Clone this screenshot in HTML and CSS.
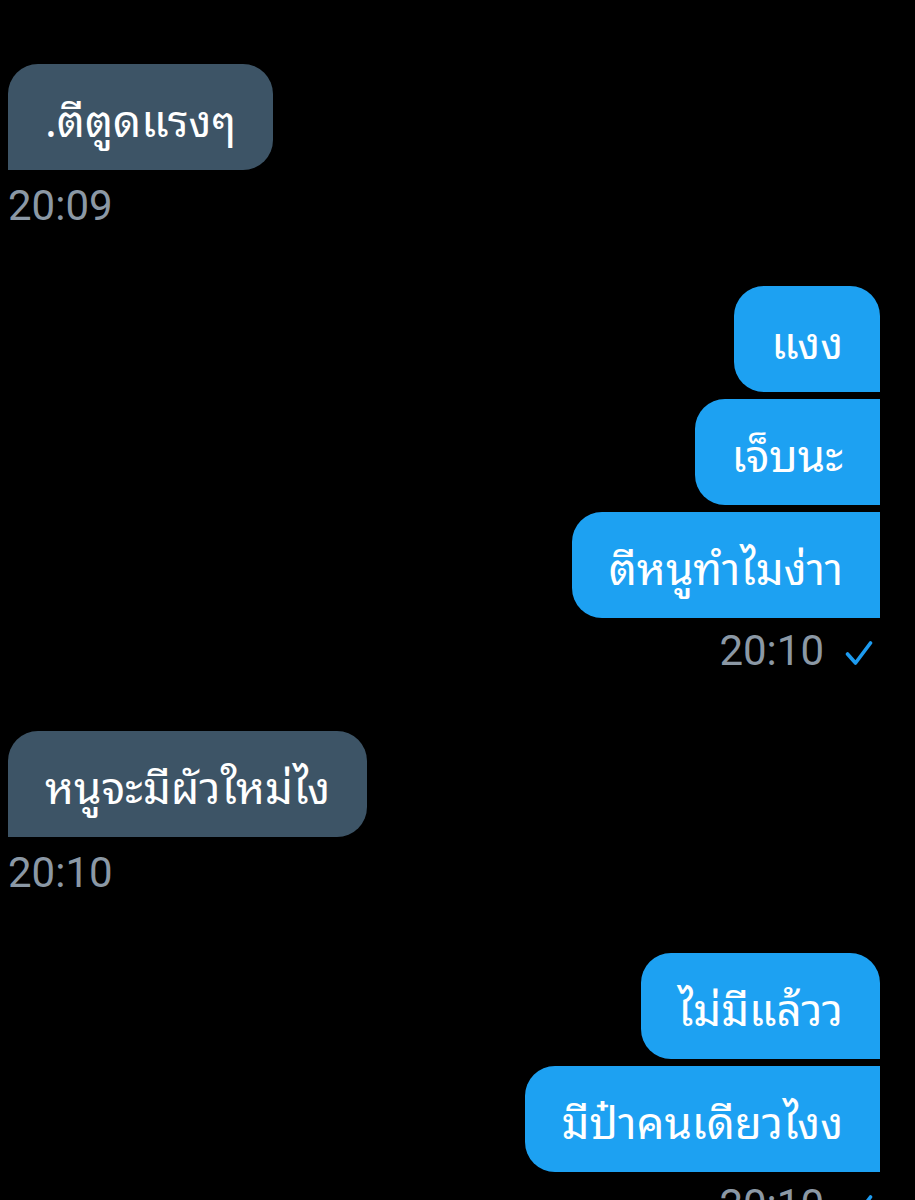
FILE: index.html
```html
<!DOCTYPE html>
<html lang="th">
<head>
<meta charset="utf-8">
<link rel="stylesheet" href="styles.css">
</head>
<body>
<main class="chat">
  <section class="group incoming first">
    <div class="bubble in-single">.ตีตูดแรงๆ</div>
    <div class="meta">20:09</div>
  </section>

  <section class="group outgoing">
    <div class="bubble out-top">แงง</div>
    <div class="bubble out-mid">เจ็บนะ</div>
    <div class="bubble out-mid">ตีหนูทำไมง่าา</div>
    <div class="meta">20:10
      <svg class="check" viewBox="0 0 28 26" width="28" height="26" aria-hidden="true"><path d="M2.5 14 L10.5 23 L25.5 3" fill="none" stroke="#1d9bf0" stroke-width="3.6" stroke-linecap="round" stroke-linejoin="round"/></svg>
    </div>
  </section>

  <section class="group incoming">
    <div class="bubble in-single">หนูจะมีผัวใหม่ไง</div>
    <div class="meta">20:10</div>
  </section>

  <section class="group outgoing">
    <div class="bubble out-top">ไม่มีแล้วว</div>
    <div class="bubble out-mid">มีป๋าคนเดียวไงง</div>
    <div class="meta">20:10
      <svg class="check" viewBox="0 0 28 26" width="28" height="26" aria-hidden="true"><path d="M2.5 14 L10.5 23 L25.5 3" fill="none" stroke="#1d9bf0" stroke-width="3.6" stroke-linecap="round" stroke-linejoin="round"/></svg>
    </div>
  </section>
</main>
</body>
</html>
```

FILE: styles.css
```css
html, body {
  margin: 0;
  padding: 0;
  background: #000;
}

body {
  width: 915px;
  height: 1200px;
  overflow: hidden;
  font-family: "Noto Sans Thai Looped", "Noto Serif Thai", "Loma", "Garuda", "Norasi", "Noto Sans Thai", Roboto, sans-serif;
}

.chat {
  padding: 64px 35px 0 8px;
  display: flex;
  flex-direction: column;
  gap: 56px;
}

.group {
  display: flex;
  flex-direction: column;
  gap: 7px;
}

.incoming { align-items: flex-start; }
.outgoing { align-items: flex-end; }

.bubble {
  font-size: 44px;
  line-height: 46px;
  padding: 30px 37px;
  color: #fff;
  white-space: nowrap;
}

.incoming .bubble { background: #3d5466; }
.outgoing .bubble { background: #1da1f2; }

.in-single { border-radius: 30px 30px 30px 0; }
.out-top { border-radius: 30px 30px 0 30px; }
.out-mid { border-radius: 30px 0 0 30px; }

.meta {
  margin-top: 5px;
  font-family: Roboto, "Liberation Sans", sans-serif;
  font-size: 42px;
  line-height: 48px;
  color: #8b98a5;
  display: flex;
  align-items: center;
  gap: 21px;
}

.outgoing .meta {
  margin-top: 2px;
  padding-right: 7px;
}

.check { display: block; margin-top: 4px; }
```
